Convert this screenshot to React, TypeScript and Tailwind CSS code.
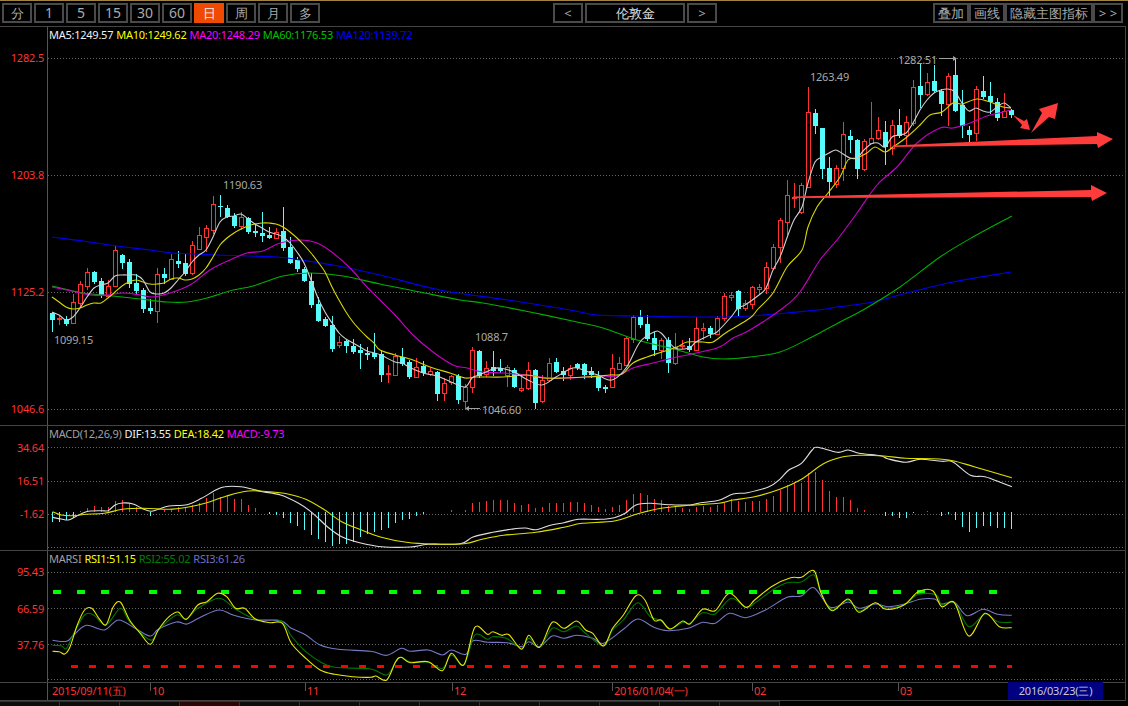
import React from "react";

type P = [number, number];
type C = [number, number, number, number, number];

const candles: C[] = [
  [312,313,320,331,0],[316,318,319,324,1],[316,319,324,325,0],[294,302,323,323,1],[281,284,303,306,1],[268,272,286,289,1],[271,272,282,283,0],[278,281,295,297,0],[280,286,296,297,1],[246,250,286,286,1],
  [254,255,263,268,0],[259,262,284,287,0],[274,283,291,293,0],[288,290,309,312,0],[299,308,311,313,0],[268,274,311,322,1],[268,274,278,283,0],[254,259,279,279,1],[251,261,264,267,0],[254,263,274,275,0],
  [241,245,273,274,1],[227,235,249,249,1],[225,228,237,251,1],[196,204,230,233,1],[195,206,207,216,0],[205,208,217,217,0],[213,216,226,227,0],[212,217,226,229,1],[217,218,232,233,0],[224,231,233,236,0],
  [212,233,236,241,0],[227,235,238,238,0],[228,232,238,238,1],[207,231,248,250,0],[237,247,263,263,0],[257,260,269,271,0],[267,269,281,281,0],[273,281,305,307,0],[297,304,321,321,0],[317,319,326,326,0],
  [316,325,349,351,0],[336,342,345,347,1],[339,341,346,352,0],[339,346,352,353,0],[344,350,353,368,0],[347,353,355,359,0],[333,353,357,358,0],[350,354,375,381,0],[365,373,374,382,1],[353,356,375,375,1],
  [348,357,364,365,0],[360,362,377,378,0],[358,367,377,377,1],[361,366,373,375,0],[368,371,374,375,1],[371,372,394,400,0],[378,383,393,400,1],[375,376,382,384,1],[374,376,400,403,0],[384,387,401,408,1],
  [347,350,387,392,1],[350,351,376,377,0],[361,368,374,376,1],[351,367,371,375,0],[359,368,371,372,0],[365,367,375,386,1],[368,370,387,387,0],[375,388,390,391,1],[362,370,388,389,1],[369,370,403,408,0],
  [375,380,401,402,1],[358,363,380,381,1],[358,362,372,372,0],[367,371,375,380,0],[365,368,375,379,1],[363,364,368,369,0],[363,364,375,378,0],[367,371,375,377,0],[371,376,388,390,0],[385,387,389,392,0],
  [354,368,387,387,1],[357,363,369,369,1],[337,338,365,365,1],[315,317,339,342,1],[310,317,325,327,0],[315,324,339,340,0],[332,338,350,355,0],[338,340,350,358,1],[337,340,363,372,0],[333,347,363,364,1],
  [340,345,346,348,1],[338,346,350,351,0],[317,328,350,350,1],[323,328,330,339,1],[326,328,334,337,0],[316,318,334,334,1],[293,296,318,320,1],[292,295,297,300,1],[290,291,309,315,0],[300,303,308,310,1],
  [286,287,304,308,1],[284,287,289,293,1],[262,267,288,293,1],[244,247,268,269,1],[218,220,247,262,1],[180,195,222,234,1],[183,197,198,207,1],[183,185,212,213,1],[87,112,187,187,1],[109,113,126,133,0],
  [128,128,169,178,0],[157,168,182,195,0],[165,168,184,187,1],[122,134,168,180,1],[130,136,140,152,0],[139,140,169,178,0],[139,141,169,170,1],[102,138,143,143,1],[117,130,138,139,1],[121,132,147,164,0],
  [120,125,148,154,1],[109,125,136,137,0],[116,122,135,144,1],[80,87,123,125,1],[64,86,95,107,0],[73,82,94,95,1],[65,81,91,92,0],[89,91,104,115,0],[73,76,104,125,1],[58,75,111,111,0],
  [90,105,126,137,0],[126,130,135,142,0],[86,89,133,140,1],[76,91,97,98,0],[82,96,102,113,0],[98,102,118,120,0],[93,111,117,117,1],[109,110,115,117,0],
];

const macdBars = [
  305,305,300,293,272,265,258,262,260,243,240,252,262,277,288,277,270,268,262,260,255,250,235,220,232,225,238,238,255,265,275,283,285,293,308,318,330,345,358,367,378,372,372,366,352,343,335,330,325,308,300,298,287,282,277,277,277,270,275,270,248,245,243,240,240,240,250,255,252,263,261,250,250,248,
  245,246,249,255,261,266,261,255,240,222,219,225,237,240,258,262,263,266,260,258,261,254,248,238,242,246,243,243,237,228,209,195,188,190,160,156,180,213,231,231,240,264,270,275,277,288,288,293,293,279,277,273,277,288,282,300,320,335,324,318,318,324,324,327,
];

const ma5: P[] = [[52,312],[59,315],[66,320],[73,317],[80,308],[87,297],[94,288],[101,285],[108,283],[115,276],[122,275],[129,275],[136,275],[143,280],[150,292],[157,294],[164,293],[171,288],[178,280],[185,272],[192,262],[199,255],[206,250],[213,237],[220,222],[227,217],[234,216],[241,214],[248,219],[255,224],[262,228],[269,232],[276,234],[283,237],[290,243],[297,252],[304,263],[311,280],[318,298],[325,312],[332,323],[339,333],[346,339],[353,343],[360,347],[367,351],[374,353],[381,355],[395,362],[402,363],[409,367],[423,373],[437,376],[451,382],[465,387],[472,378],[479,375],[493,369],[500,368],[514,372],[528,380],[542,385],[556,377],[570,369],[577,368],[591,373],[598,375],[612,380],[626,368],[640,342],[654,332],[661,333],[675,348],[689,348],[696,342],[710,335],[717,332],[731,317],[738,308],[745,305],[759,295],[766,288],[773,270],[780,257],[788,235],[794,220],[802,207],[808,183],[815,162],[822,157],[829,153],[836,150],[843,154],[850,158],[857,158],[864,150],[871,144],[878,143],[885,147],[892,137],[899,135],[906,133],[913,123],[920,110],[927,100],[934,93],[941,90],[948,89],[955,92],[962,103],[969,111],[976,108],[983,111],[990,112],[997,107],[1004,103],[1011,108]];
const ma10: P[] = [[52,297],[59,302],[66,307],[73,309],[80,308],[87,305],[94,303],[101,303],[108,298],[115,292],[122,286],[129,282],[136,280],[143,282],[150,284],[157,284],[164,283],[171,279],[178,278],[185,280],[192,279],[199,275],[206,268],[213,257],[220,245],[227,238],[234,233],[241,229],[248,226],[255,224],[262,223],[269,223],[276,224],[283,227],[290,232],[297,238],[304,245],[311,253],[318,262],[325,272],[332,287],[339,300],[346,312],[353,322],[360,330],[367,337],[374,343],[380,350],[395,355],[413,360],[430,367],[450,373],[465,378],[477,377],[503,377],[527,375],[543,378],[563,378],[587,377],[610,375],[622,374],[633,363],[647,357],[662,352],[677,347],[687,342],[703,342],[713,342],[727,332],[750,318],[758,309],[773,293],[787,267],[802,250],[808,227],[817,207],[828,193],[840,177],[848,160],[857,158],[867,153],[875,147],[885,152],[893,147],[907,137],[920,125],[930,115],[942,112],[953,103],[962,104],[977,99],[990,102],[1003,107],[1011,108]];
const ma20: P[] = [[52,287],[67,290],[90,295],[107,295],[123,293],[140,295],[153,297],[170,293],[190,285],[210,270],[230,260],[247,253],[263,251],[280,243],[300,240],[317,243],[333,253],[350,268],[367,287],[380,300],[395,315],[413,335],[433,352],[453,365],[467,368],[483,372],[503,373],[527,375],[550,378],[570,378],[597,376],[617,376],[633,368],[653,363],[677,357],[717,348],[733,338],[750,330],[783,308],[800,292],[820,260],[837,240],[857,213],[877,185],[897,167],[917,143],[940,128],[953,128],[970,123],[987,116],[1003,112],[1011,110]];
const ma60: P[] = [[52,286],[83,293],[113,296],[140,299],[167,302],[187,302],[207,298],[233,290],[253,286],[283,276],[310,273],[343,276],[380,284],[420,292],[460,300],[483,303],[530,312],[577,322],[603,328],[637,340],[670,348],[703,357],[723,359],[750,357],[780,352],[810,338],[840,322],[863,310],[900,287],[940,257],[973,237],[1012,216]];
const ma120: P[] = [[52,237],[83,241],[117,246],[150,250],[173,253],[217,255],[277,257],[300,260],[333,265],[380,275],[440,290],[508,300],[570,310],[597,315],[637,316],[703,317],[750,316],[817,310],[837,307],[873,302],[907,293],[953,282],[1011,272]];

const mapped = (a: P[], b: P[], y0: number): P[] => [
  ...a.map(([x, y]): P => [x / 2.78, y0 + y / 3]),
  ...b.map(([x, y]): P => [564 + x / 2.78, y0 + y / 3]),
];

const dif = mapped(
  [[146,292],[170,297],[190,300],[210,290],[240,275],[280,272],[300,272],[320,255],[340,249],[370,252],[400,268],[420,274],[440,268],[470,258],[520,254],[560,235],[600,210],[625,200],[670,200],[700,207],[730,215],[780,225],[830,250],[870,280],[910,320],[950,350],[1000,368],[1060,380],[1140,381],[1190,373],[1280,371],[1315,351],[1370,337],[1420,328],[1460,324],[1490,329],[1530,316]],
  [[0,308],[40,298],[100,298],[140,293],[170,280],[200,255],[240,250],[290,254],[350,255],[380,248],[430,241],[470,222],[510,218],[570,200],[600,178],[625,150],[660,130],[690,90],[705,82],[760,97],[790,90],[820,100],[880,107],[900,116],[950,127],[990,118],[1050,124],[1080,125],[1130,166],[1170,170],[1220,190],[1245,200]],
  420
);
const dea = mapped(
  [[146,275],[170,285],[205,287],[240,283],[290,280],[340,268],[400,265],[470,268],[520,262],[570,250],[630,228],[690,213],[750,215],[800,222],[850,238],[900,268],[950,305],[1000,328],[1060,352],[1130,367],[1200,372],[1290,371],[1340,358],[1400,346],[1490,337]],
  [[0,322],[50,310],[140,303],[200,283],[270,265],[350,256],[430,250],[470,240],[530,230],[600,208],[660,178],[720,132],[770,112],[820,106],[890,108],[950,115],[1020,116],[1080,122],[1140,140],[1245,173]],
  420
);
const rsi1 = mapped(
  [[146,304],[165,305],[180,312],[195,290],[215,225],[235,180],[255,175],[275,205],[295,224],[315,170],[335,157],[360,210],[390,250],[418,283],[440,240],[470,200],[495,186],[518,208],[550,165],[575,155],[605,130],[630,140],[655,175],[680,175],[710,207],[750,218],[785,220],[810,280],[850,325],[890,360],[930,373],[980,380],[1030,382],[1045,378],[1075,390],[1100,335],[1115,322],[1140,338],[1190,335],[1230,362],[1255,310],[1290,344],[1320,232],[1355,253],[1370,245],[1395,256],[1415,254],[1450,298],[1470,256],[1500,292],[1535,217]],
  [[0,235],[35,213],[60,240],[80,250],[110,288],[135,235],[165,195],[200,137],[225,150],[250,210],[270,210],[295,237],[330,213],[350,222],[385,178],[420,182],[460,130],[505,172],[530,150],[580,108],[630,83],[660,82],[695,62],[715,130],[745,182],[790,147],[820,187],[865,158],[895,178],[945,165],[985,125],[1025,122],[1050,170],[1085,158],[1125,258],[1170,190],[1210,230],[1245,233]],
  550
);
const rsi2 = mapped(
  [[146,286],[170,287],[185,295],[205,250],[235,195],[260,195],[295,224],[335,175],[360,215],[418,270],[440,240],[490,195],[518,208],[550,175],[610,145],[655,178],[710,207],[780,212],[810,258],[850,305],[890,335],[930,352],[1030,357],[1075,375],[1100,335],[1115,322],[1140,335],[1190,337],[1230,355],[1255,315],[1290,344],[1320,255],[1355,268],[1370,260],[1410,266],[1450,295],[1470,265],[1500,292],[1535,235]],
  [[0,245],[35,228],[60,250],[110,288],[135,240],[165,210],[205,158],[240,200],[270,212],[295,237],[330,217],[350,220],[385,188],[420,192],[465,145],[505,172],[530,160],[580,120],[620,98],[660,96],[695,75],[715,130],[745,178],[790,150],[820,183],[865,160],[895,173],[945,165],[985,133],[1035,135],[1050,165],[1085,158],[1125,230],[1170,192],[1205,215],[1245,217]],
  550
);
const rsi3 = mapped(
  [[146,271],[185,274],[205,255],[240,226],[290,240],[330,210],[380,238],[418,258],[440,238],[490,216],[520,222],[560,200],[610,180],[650,196],[710,210],[780,212],[810,235],[850,255],[890,285],[940,298],[1030,304],[1075,316],[1115,295],[1140,304],[1190,300],[1230,315],[1255,300],[1295,313],[1315,272],[1355,277],[1410,278],[1450,290],[1470,275],[1500,290],[1535,258]],
  [[0,265],[35,256],[80,265],[110,280],[165,238],[205,207],[250,232],[290,242],[345,235],[385,217],[420,220],[460,190],[505,203],[560,180],[620,142],[660,138],[695,113],[740,172],[790,156],[820,175],[865,162],[900,170],[945,163],[990,148],[1030,147],[1050,162],[1085,157],[1120,197],[1165,178],[1205,193],[1245,196]],
  550
);

function smooth(p: P[]): string {
  let d = `M${p[0][0].toFixed(1)} ${p[0][1].toFixed(1)}`;
  for (let i = 0; i < p.length - 1; i++) {
    const a = p[Math.max(i - 1, 0)], b = p[i], c = p[i + 1], e = p[Math.min(i + 2, p.length - 1)];
    const c1x = b[0] + (c[0] - a[0]) / 6, c1y = b[1] + (c[1] - a[1]) / 6;
    const c2x = c[0] - (e[0] - b[0]) / 6, c2y = c[1] - (e[1] - b[1]) / 6;
    d += `C${c1x.toFixed(1)} ${c1y.toFixed(1)} ${c2x.toFixed(1)} ${c2y.toFixed(1)} ${c[0].toFixed(1)} ${c[1].toFixed(1)}`;
  }
  return d;
}

const Curve = ({ pts, color, w = 1.1 }: { pts: P[]; color: string; w?: number }) => (
  <path d={smooth(pts)} fill="none" stroke={color} strokeWidth={w} />
);

const Dotted = ({ y }: { y: number }) => (
  <line x1={48} x2={1125} y1={y} y2={y} stroke="#666" strokeDasharray="1 2" shapeRendering="crispEdges" />
);

const RED = "#ff3232";
const CYAN = "#54fcfc";

const Candle = ({ c, i }: { c: C; i: number }) => {
  const x = 52.5 + 7 * i;
  const [wt, bt, bb, wb, up] = c;
  if (up) {
    return (
      <g stroke={RED} shapeRendering="crispEdges">
        <line x1={x} x2={x} y1={wt} y2={bt} />
        <line x1={x} x2={x} y1={bb} y2={wb + 1} />
        <rect x={x - 2} y={bt + 0.5} width={4} height={Math.max(bb - bt, 1)} fill="#000" />
      </g>
    );
  }
  return (
    <g shapeRendering="crispEdges">
      <line x1={x} x2={x} y1={wt} y2={wb + 1} stroke={CYAN} />
      <rect x={x - 2.5} y={bt} width={5} height={Math.max(bb - bt, 1)} fill={CYAN} />
    </g>
  );
};

const Note = ({ x, y, t }: { x: number; y: number; t: string }) => (
  <text x={x} y={y} fontSize={11} letterSpacing={-0.25} fill="#a8a8a8">{t}</text>
);

const Btn = ({ t, w = "w-[30px]", active = false, cls = "text-[#aaaaaa]", size = "text-[13px]" }: { t: string; w?: string; active?: boolean; cls?: string; size?: string }) => (
  <div className={`flex h-[20px] ${w} items-center justify-center border-2 border-[#4a4a4a] ${size} leading-none ${active ? "border-[#f04a00] bg-[#f04a00] text-[#eeeeee]" : cls}`}>
    {t}
  </div>
);

const AxisLabel = ({ top, t }: { top: number; t: string }) => (
  <div className="absolute right-[3px] text-[11px] leading-[16px] tracking-[-0.2px] text-[#ff3232]" style={{ top }}>{t}</div>
);

const Panel = ({ h, labels, legend, top, children }: { h: string; labels: [number, string][]; legend: [string, string][]; top: number; children: React.ReactNode }) => (
  <div className={`flex ${h} w-[1126px] border-b border-r border-[#444444]`}>
    <div className="relative w-[48px] shrink-0 border-r border-[#555555]">
      {labels.map(([y, t]) => <AxisLabel key={t} top={y - top - 8} t={t} />)}
    </div>
    <div className="relative flex-1">
      {children}
      <div className="absolute left-[1px] top-0 flex gap-[3px] whitespace-nowrap text-[11px] leading-[16px] tracking-[-0.25px]">
        {legend.map(([t, c]) => <span key={t} style={{ color: c }}>{t}</span>)}
      </div>
    </div>
  </div>
);

const ticks: [number, string][] = [[150, "10"], [305, "11"], [452, "12"], [612, "2016/01/04(一)"], [752, "02"], [898, "03"]];

export default function App() {
  return (
    <div className="h-[706px] w-[1128px] overflow-hidden bg-black font-['Liberation_Sans','Noto_Sans_CJK_SC',sans-serif]">
      <div className="h-[1px] bg-[#a08440]" />
      <div className="flex h-[26px] w-[1126px] items-start border-b border-[#444444] pt-[2px]">
        <div className="ml-[2px] flex gap-[2px]">
          <Btn t="分" />
          {["1", "5", "15", "30", "60"].map((t) => <Btn key={t} t={t} size="text-[14px]" />)}
          <Btn t="日" active />
          {["周", "月", "多"].map((t) => <Btn key={t} t={t} />)}
        </div>
        <div className="ml-[233px] flex gap-[2px]">
          <Btn t="<" />
          <Btn t="伦敦金" w="w-[100px]" cls="text-[#e0e0e0]" />
          <Btn t=">" />
        </div>
        <div className="ml-auto mr-[3px] flex">
          <Btn t="叠加" w="w-[36px]" />
          <Btn t="画线" w="w-[36px]" />
          <Btn t="隐藏主图指标" w="w-[88px]" />
          <Btn t="> >" />
        </div>
      </div>

      <Panel
        h="h-[399px]"
        top={27}
        labels={[[58, "1282.5"], [175, "1203.8"], [292, "1125.2"], [409, "1046.6"]]}
        legend={[["MA5:1249.57", "#f0f0f0"], ["MA10:1249.62", "#ffff00"], ["MA20:1248.29", "#ff00ff"], ["MA60:1176.53", "#00c000"], ["MA120:1139.72", "#0000ff"]]}
      >
        <svg className="block" width={1077} height={398} viewBox="48 27 1077 398">
          {[58.5, 175.5, 292.5, 409.5].map((y) => <Dotted key={y} y={y} />)}
          {candles.map((c, i) => <Candle key={i} c={c} i={i} />)}
          <Curve pts={ma120} color="#0000f0" />
          <Curve pts={ma60} color="#00b000" />
          <Curve pts={ma20} color="#c800c8" />
          <Curve pts={ma10} color="#d8d800" />
          <Curve pts={ma5} color="#d0d0d0" />
          <Note x={54} y={344} t="1099.15" />
          <Note x={223} y={189} t="1190.63" />
          <Note x={475} y={341} t="1088.7" />
          <Note x={482} y={414} t="1046.60" />
          <Note x={810} y={81} t="1263.49" />
          <Note x={898} y={64} t="1282.51" />
          <path d="M480 408.5H468" stroke="#a0a0a0" />
          <path d="M465 408.5l4-2.5v5z" fill="#a0a0a0" />
          <path d="M939 58.5H954" stroke="#a0a0a0" />
          <path d="M957 58.5l-4-2.5v5z" fill="#a0a0a0" />
          <g fill="#ff3c3c">
            <polygon points="893,145.5 1097,136 1097,132 1113,139 1098,148 1097,144 893,147" />
            <polygon points="793,196.5 1091,190 1091,185 1107,193 1092,201 1091,197 793,198" />
            <polygon points="1013,115 1024,121 1027,119 1030,130 1020,128 1022,125" />
            <polygon points="1031,133 1042,113 1039,109 1058,103 1055,119 1049,117" />
          </g>
        </svg>
      </Panel>

      <Panel
        h="h-[125px]"
        top={426}
        labels={[[448, "34.64"], [481, "16.51"], [514, "-1.62"]]}
        legend={[["MACD(12,26,9)", "#a0a0a0"], ["DIF:13.55", "#f0f0f0"], ["DEA:18.42", "#ffff00"], ["MACD:-9.73", "#ff00ff"]]}
      >
        <svg className="block" width={1077} height={124} viewBox="48 426 1077 124">
          {[447.5, 481.5, 514.5, 547.5].map((y) => <Dotted key={y} y={y} />)}
          {macdBars.map((z, i) => {
            if (z === 275) return null;
            const x = 52.5 + 7 * i;
            const y = 420 + z / 3;
            return <line key={i} x1={x} x2={x} y1={512} y2={Math.round(y)} stroke={z < 275 ? RED : CYAN} shapeRendering="crispEdges" />;
          })}
          <Curve pts={dif} color="#e0e0e0" />
          <Curve pts={dea} color="#e0e000" />
        </svg>
      </Panel>

      <Panel
        h="h-[132px]"
        top={551}
        labels={[[572, "95.43"], [609, "66.59"], [645, "37.76"]]}
        legend={[["MARSI", "#a0a0a0"], ["RSI1:51.15", "#ffff00"], ["RSI2:55.02", "#008000"], ["RSI3:61.26", "#7070c0"]]}
      >
        <svg className="block" width={1077} height={131} viewBox="48 551 1077 131">
          {[572.5, 608.5, 644.5, 679.5].map((y) => <Dotted key={y} y={y} />)}
          <line x1={52.5} x2={997} y1={592} y2={592} stroke="#00ff00" strokeWidth={4} strokeDasharray="8 16" shapeRendering="crispEdges" />
          <line x1={71} x2={1012} y1={666} y2={666} stroke="#ff0000" strokeWidth={3} strokeDasharray="7 11" shapeRendering="crispEdges" />
          <Curve pts={rsi3} color="#7878c8" />
          <Curve pts={rsi2} color="#007800" />
          <Curve pts={rsi1} color="#e8e800" />
        </svg>
      </Panel>

      <div className="flex h-[18px] w-[1126px] border-b border-r border-[#444444]">
        <div className="w-[48px] shrink-0 border-r border-[#555555]" />
        <div className="relative flex-1 text-[11px] leading-[16px] tracking-[-0.2px] text-[#ff3232]">
          <span className="absolute left-[4px] top-0">2015/09/11(五)</span>
          {ticks.map(([x, t]) => (
            <span key={t} className="absolute top-0 pl-[2px] before:absolute before:left-0 before:top-0 before:h-[8px] before:w-[1px] before:bg-[#555555]" style={{ left: x - 48 }}>{t}</span>
          ))}
          <span className="absolute left-[960px] top-[-1px] flex h-[18px] w-[95px] items-center justify-center bg-[#000080] text-[#c8c8d8]">2016/03/23(三)</span>
        </div>
      </div>

      <div className="flex h-[5px]">
        {Array.from({ length: 13 }).map((_, i) => (
          <div key={i} className={`h-full w-[60px] border-r border-t border-[#333333] ${i === 3 ? "bg-[#2a0808]" : "bg-[#0c0c0c]"}`} />
        ))}
      </div>
    </div>
  );
}
